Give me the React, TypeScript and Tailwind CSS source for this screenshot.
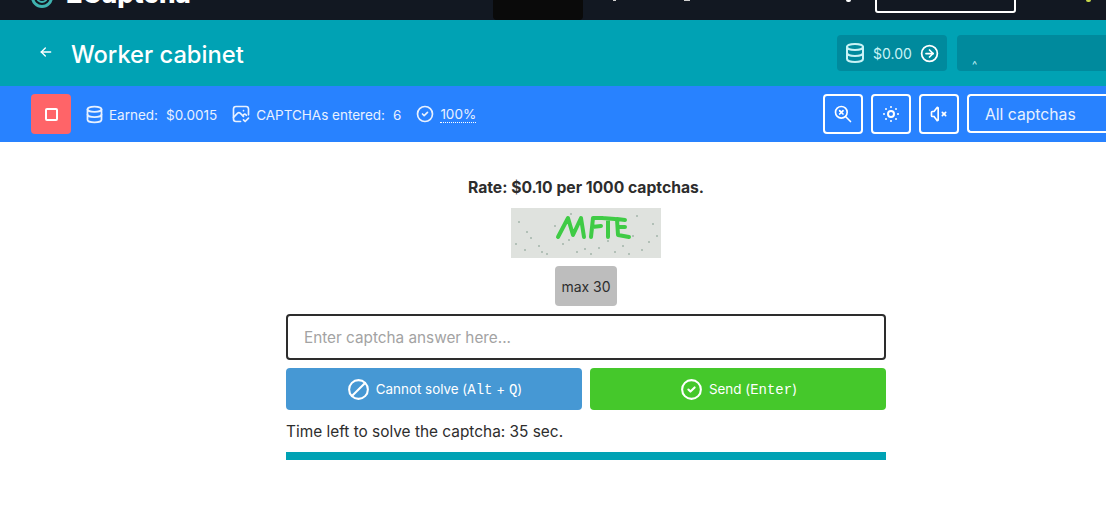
import { TbArrowLeft, TbBan, TbBrightnessDown, TbCircleArrowRight, TbCircleCheck, TbDatabase, TbPhotoCheck, TbVolume3, TbZoomCancel } from "react-icons/tb";

const specks = [
  [8, 14], [14, 42], [20, 30], [28, 38], [31, 44], [44, 18], [52, 36], [60, 6], [66, 44], [74, 41], [88, 40], [97, 33], [104, 44], [122, 28], [131, 42], [142, 16], [138, 34], [126, 8], [16, 24], [36, 46], [58, 32], [80, 46], [112, 38], [146, 28], [5, 36], [118, 46],
];

const App = () => {
  return (
    <div className="h-[524px] overflow-hidden bg-white font-['Inter',sans-serif] text-[#2d2d2d]">
      <div className="flex h-[20px] overflow-hidden bg-[#121822] pl-[31px]">
        <div className="flex w-[462px] shrink-0 items-end">
          <div className="mb-[12px] h-[22px] w-[22px] shrink-0 rounded-full border-[3px] border-[#3fb3b0] p-[2px]">
            <div className="h-full w-full rounded-full border-2 border-[#3fb3b0]" />
          </div>
          <span className="mb-[11px] ml-[13px] text-[26px] leading-[30px] font-extrabold text-white">2Captcha</span>
        </div>
        <div className="h-[20px] w-[90px] shrink-0 rounded-b bg-[#0a0a0a]" />
        <div className="ml-[30px] h-[1px] w-[3px] shrink-0 bg-[#cfcfcf]" />
        <div className="ml-[68px] h-[1px] w-[6px] shrink-0 bg-[#cfcfcf]" />
        <div className="ml-[156px] h-[2px] w-[5px] shrink-0 rounded-b bg-white" />
        <div className="ml-[24px] mt-[-16px] h-[29px] w-[141px] shrink-0 rounded-[3px] border-2 border-white" />
        <div className="ml-[70px] h-[2px] w-[5px] shrink-0 rounded-b bg-[#c7d84a]" />
      </div>

      {/* title bar */}
      <div className="flex h-[66px] items-center bg-[#00a2b4] pl-[38px]">
        <TbArrowLeft className="mb-[2px] h-[16px] w-[16px] text-white" />
        <h1 className="mt-[3px] ml-[17px] text-[23.7px] font-medium text-white">Worker cabinet</h1>
        <div className="ml-auto flex h-[36px] w-[110px] items-center rounded bg-[#008a9d] pl-[6px] text-[14px] text-[#c9f3f6]">
          <TbDatabase className="h-[24px] w-[24px]" />
          <span className="ml-[6px]">$0.00</span>
          <TbCircleArrowRight className="ml-[7px] h-[21px] w-[21px] text-white" />
        </div>
        <div className="ml-[10px] flex h-[36px] w-[149px] items-end rounded-l bg-[#008a9d] pl-[15px] text-[11px] leading-[12px] text-[#c9f3f6]">
          ^
        </div>
      </div>

      {/* worker toolbar */}
      <div className="flex h-[56px] items-center bg-[#2882ff] pl-[31px] text-[13.5px] text-[#e8f1ff]">
        <button className="flex h-[40px] w-[40px] items-center justify-center rounded bg-[#ff6468]">
          <span className="h-[13px] w-[13px] rounded-[2px] border-2 border-white" />
        </button>
        <TbDatabase className="ml-[13px] h-[21px] w-[21px]" />
        <span className="mt-[2px] ml-[4px]">Earned:</span>
        <span className="mt-[2px] ml-[8px]">$0.0015</span>
        <TbPhotoCheck className="ml-[14px] h-[20px] w-[20px]" />
        <span className="mt-[2px] ml-[5px]">CAPTCHAs entered:</span>
        <span className="mt-[2px] ml-[8px]">6</span>
        <TbCircleCheck className="ml-[14px] h-[20px] w-[20px]" />
        <span className="mt-[2px] ml-[5px] border-b border-dotted border-white leading-[15px]">100%</span>
        <div className="ml-auto flex gap-[8px] text-white">
          <button className="flex h-[40px] w-[40px] items-center justify-center rounded border-2 border-white">
            <TbZoomCancel className="h-[20px] w-[20px]" />
          </button>
          <button className="flex h-[40px] w-[40px] items-center justify-center rounded border-2 border-white">
            <TbBrightnessDown className="h-[24px] w-[24px]" />
          </button>
          <button className="flex h-[40px] w-[40px] items-center justify-center rounded border-2 border-white">
            <TbVolume3 className="h-[20px] w-[20px]" />
          </button>
          <div className="flex h-[39px] w-[139px] items-center rounded-l border-2 border-r-0 border-white pt-[2px] pl-[16px] text-[15.7px] text-[#e8f1ff]">
            All captchas
          </div>
        </div>
      </div>

      {/* captcha form */}
      <div className="ml-[286px] flex w-[600px] flex-col items-center pt-[35px]">
        <p className="text-[15.7px] leading-[21px] font-bold">Rate: $0.10 per 1000 captchas.</p>
        <div className="mt-[10px] h-[50px] w-[150px] overflow-hidden">
          <svg viewBox="0 0 150 50" width="150" height="50" className="blur-[0.6px]">
            <rect width="150" height="50" fill="#dfe2de" />
            {specks.map(([x, y]) => (
              <circle key={`${x}-${y}`} cx={x} cy={y} r="1" fill="#a3b5aa" />
            ))}
            <path d="M47 29 L57 10 L62 27 L70 10 L73 29 M80 29 L82 10 L92 10 M81 19 L90 18 M91 10 L104 11 M97 11 L97 29 M106 11 L114 12 M106 11 L107 27 L118 29 M107 19 L114 19" fill="none" stroke="#3fcb45" strokeWidth="4" strokeLinecap="round" strokeLinejoin="round" />
          </svg>
        </div>
        <div className="mt-[8px] flex h-[40px] w-[62px] items-center justify-center rounded bg-[#bdbdbd] text-[14px]">max 30</div>
        <input
          readOnly
          placeholder="Enter captcha answer here..."
          className="mt-[8px] h-[46px] w-full rounded border-2 border-[#2d2d2d] px-[16px] text-[15.3px] outline-none placeholder:text-[#a3a3a3]"
        />
        <div className="mt-[8px] flex w-full gap-[8px] text-[13.4px] text-white">
          <button className="flex h-[42px] flex-1 items-center justify-center gap-[5px] rounded bg-[#4698d4]">
            <TbBan className="h-[25px] w-[25px] -scale-x-100" />
            <span className="pt-[1px]">
              Cannot solve (<code className="font-['Liberation_Mono',monospace] text-[14px]">Alt</code> + <code className="font-['Liberation_Mono',monospace] text-[14px]">Q</code>)
            </span>
          </button>
          <button className="flex h-[42px] flex-1 items-center justify-center gap-[5px] rounded bg-[#45c82b]">
            <TbCircleCheck className="h-[25px] w-[25px]" />
            <span className="pt-[1px]">
              Send (<code className="font-['Liberation_Mono',monospace] text-[14px]">Enter</code>)
            </span>
          </button>
        </div>
        <p className="mt-[10px] w-full text-[15.4px] leading-[23px]">Time left to solve the captcha: 35 sec.</p>
        <div className="mt-[9px] h-[8px] w-full bg-[#00a2b4]" />
      </div>
    </div>
  );
};

export default App;
